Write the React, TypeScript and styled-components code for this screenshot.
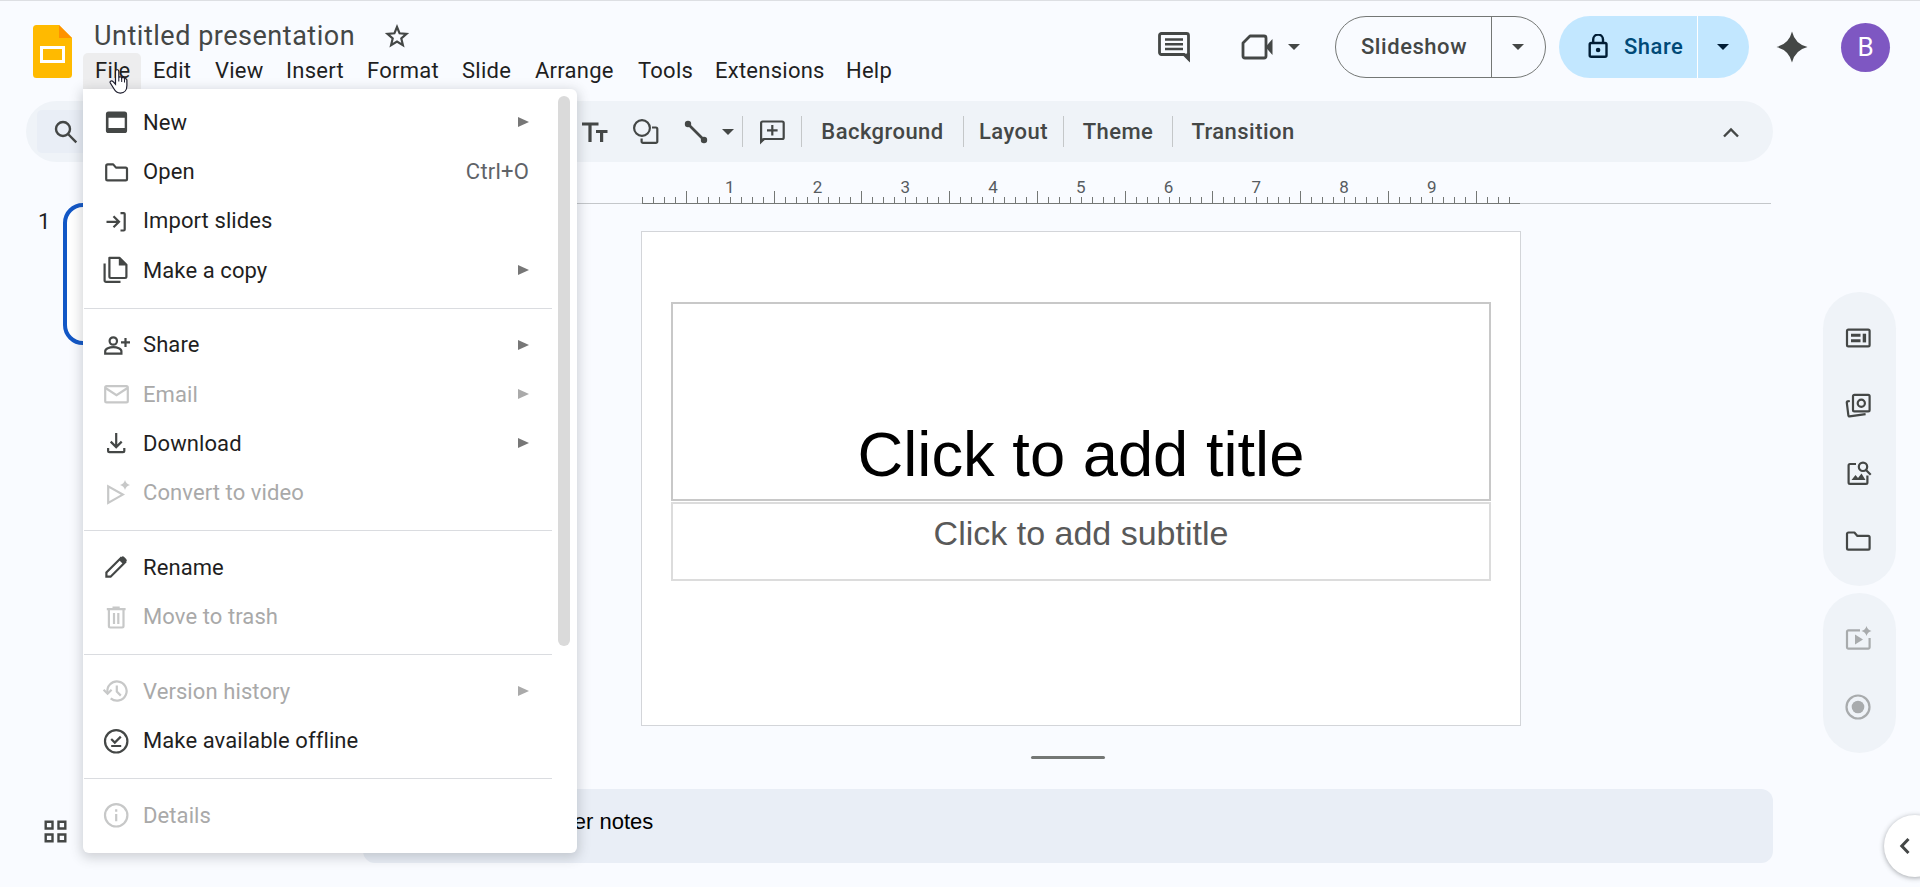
import type { ReactNode } from "react";
import styled, { createGlobalStyle } from "styled-components";

interface IconProps {
  size?: number;
  children: ReactNode;
}

const Icon: React.FC<IconProps> = ({ size = 28, children }) => (
  <svg
    width={size}
    height={size}
    viewBox={`0 0 ${size} ${size}`}
    fill="none"
    stroke="currentColor"
    strokeWidth="2.2"
  >
    {children}
  </svg>
);

const icons = {
  fresh: (
    <Icon>
      <path
        fill="currentColor"
        stroke="none"
        fillRule="evenodd"
        d="M6.500 3.600h16a2.600 2.600 0 0 1 2.600 2.600v16.200a2.600 2.600 0 0 1-2.600 2.600h-16a2.600 2.600 0 0 1-2.600-2.600V6.200A2.600 2.600 0 0 1 6.500 3.600ZM6.500 9.800v10.200h16.200V9.800Z"
      />
    </Icon>
  ),
  folder: (
    <Icon>
      <path
        strokeLinejoin="round"
        d="M4.200 21V8a1.600 1.600 0 0 1 1.600-1.600h5.400l2.800 3.200h9.600a1.400 1.400 0 0 1 1.400 1.400v10a1.400 1.400 0 0 1-1.400 1.400H5.600A1.400 1.400 0 0 1 4.200 21Z"
      />
    </Icon>
  ),
  importSlides: (
    <Icon>
      <path d="M4.500 14.800h12M11.500 9.300l5.500 5.500-5.500 5.500M18.500 6.100h3.200a1 1 0 0 1 1 1v15.400a1 1 0 0 1-1 1h-3.200" />
    </Icon>
  ),
  copy: (
    <Icon size={30}>
      <path d="M3.600 8.500v17a1.400 1.400 0 0 0 1.400 1.400h14.500M8.400 2.800h10l7 7v11.800a1.400 1.400 0 0 1-1.400 1.400H9.800a1.400 1.400 0 0 1-1.400-1.400Z" strokeLinejoin="round" />
      <path d="M17.800 2.400v8h8Z" fill="currentColor" stroke="none" />
    </Icon>
  ),
  personAdd: (
    <Icon>
      <circle cx="11.300" cy="10" r="3.700" />
      <path d="M3.200 22.700v-2.500c0-2.600 4.200-4 8.100-4s8.100 1.400 8.100 4v2.500ZM19 11.400h9M23.500 7v9" />
    </Icon>
  ),
  mail: (
    <Icon>
      <rect x="3.200" y="6.200" width="22.600" height="16.200" rx="1.400" />
      <path d="M3.500 8l11 7.200 11-7.200" />
    </Icon>
  ),
  download: (
    <Icon>
      <path d="M14.200 4v14M8.700 12.600l5.500 5.500 5.500-5.500M6.100 19v2.800a1.400 1.400 0 0 0 1.400 1.400h13.400a1.400 1.400 0 0 0 1.400-1.400V19" />
    </Icon>
  ),
  video: (
    <Icon>
      <path d="M6.200 7.300v16.600l14.600-8.300Z" />
      <path
        fill="currentColor"
        stroke="none"
        d="M23 1q1 4 5 5-4 1-5 5-1-4-5-5 4-1 5-5Z"
      />
    </Icon>
  ),
  pencil: (
    <Icon>
      <path d="M4.400 23.700v-4.200L18.900 5l4.200 4.200L8.600 23.700Z" />
      <path
        d="M16.700 6.700l2.700-2.700a2 2 0 0 1 2.800 0l2 2a2 2 0 0 1 0 2.800l-2.700 2.700Z"
        fill="currentColor"
        stroke="none"
      />
    </Icon>
  ),
  trash: (
    <Icon>
      <path d="M4.800 6.200h18.800M10.500 4.700h7.200M6.900 6.500v16.600a1.400 1.400 0 0 0 1.400 1.400h11.800a1.400 1.400 0 0 0 1.400-1.400V6.500M12 10v11M16.300 10v11" />
    </Icon>
  ),
  history: (
    <Icon>
      <path d="M5.500 15.500a9.600 9.600 0 1 1 3.200 5.800M14.800 8.600v6l4 4" />
      <path d="M1.600 12.800l4 4 4-4" />
    </Icon>
  ),
  offline: (
    <Icon>
      <circle cx="14.200" cy="14.300" r="11.200" />
      <path d="M9.200 12l3.600 3.600 6-6M9.200 19h10" />
    </Icon>
  ),
  info: (
    <Icon>
      <circle cx="14.200" cy="14.300" r="11.200" />
      <path d="M14.200 13v7.200M14.200 8.300v2.400" />
    </Icon>
  ),
};

interface MenuEntry {
  label: string;
  icon: ReactNode;
  disabled?: boolean;
  submenu?: boolean;
  shortcut?: string;
}

const fileMenu: MenuEntry[][] = [
  [
    { label: "New", icon: icons.fresh, submenu: true },
    { label: "Open", icon: icons.folder, shortcut: "Ctrl+O" },
    { label: "Import slides", icon: icons.importSlides },
    { label: "Make a copy", icon: icons.copy, submenu: true },
  ],
  [
    { label: "Share", icon: icons.personAdd, submenu: true },
    { label: "Email", icon: icons.mail, submenu: true, disabled: true },
    { label: "Download", icon: icons.download, submenu: true },
    { label: "Convert to video", icon: icons.video, disabled: true },
  ],
  [
    { label: "Rename", icon: icons.pencil },
    { label: "Move to trash", icon: icons.trash, disabled: true },
  ],
  [
    { label: "Version history", icon: icons.history, submenu: true, disabled: true },
    { label: "Make available offline", icon: icons.offline },
  ],
  [{ label: "Details", icon: icons.info, disabled: true }],
];

const menuBar = [
  { label: "File", width: 58 },
  { label: "Edit", width: 62 },
  { label: "View", width: 71 },
  { label: "Insert", width: 81 },
  { label: "Format", width: 95 },
  { label: "Slide", width: 73 },
  { label: "Arrange", width: 103 },
  { label: "Tools", width: 77 },
  { label: "Extensions", width: 131 },
  { label: "Help", width: 70 },
];

const ticks = Array.from({ length: 80 }, (_, i) => i);

const FileMenu: React.FC = () => (
  <Dropdown>
    <MenuList>
      {fileMenu.map((group, i) => (
        <MenuGroup key={i}>
          {group.map((item) => (
            <MenuRow key={item.label} $disabled={item.disabled}>
              <MenuIcon $disabled={item.disabled}>{item.icon}</MenuIcon>
              <span>{item.label}</span>
              {item.shortcut && <Shortcut>{item.shortcut}</Shortcut>}
              {item.submenu && <Arrow $disabled={item.disabled} />}
            </MenuRow>
          ))}
        </MenuGroup>
      ))}
    </MenuList>
    <Scrollbar />
  </Dropdown>
);

const Header: React.FC = () => (
  <HeaderBar>
    <Logo width="39" height="53" viewBox="0 0 39 53">
      <path d="M3.500 0H26l13 13v36.500a3.500 3.500 0 0 1-3.500 3.500h-32A3.500 3.500 0 0 1 0 49.500v-46A3.500 3.500 0 0 1 3.500 0Z" fill="#ffba00" />
      <path d="M26 0l13 13H26Z" fill="#ff9200" />
      <rect x="8.500" y="22.500" width="22" height="14" fill="none" stroke="#fff" strokeWidth="3" />
    </Logo>
    <TitleColumn>
      <TitleRow>
        <DocTitle>Untitled presentation</DocTitle>
        <svg width="26" height="26" viewBox="0 0 26 26" fill="none" stroke="#444746" strokeWidth="2.200">
          <path d="M13 4l2.600 6.300 6.900.6-5.200 4.500 1.600 6.700-5.900-3.600-5.900 3.600 1.600-6.700-5.200-4.500 6.900-.6Z" />
        </svg>
      </TitleRow>
      <MenuBar>
        {menuBar.map((item, i) => (
          <MenuButton key={item.label} $width={item.width} $open={i === 0}>
            {item.label}
          </MenuButton>
        ))}
      </MenuBar>
    </TitleColumn>
    <Actions>
      <svg width="32" height="32" viewBox="0 0 32 32" fill="none" stroke="#444746">
        <path d="M3.500 2.500h25a2 2 0 0 1 2 2V28l-4.500-4.500H3.500a2 2 0 0 1-2-2v-17a2 2 0 0 1 2-2Z" strokeWidth="2.800" />
        <path d="M26 23l5.800 8V22Z" fill="#444746" stroke="none" />
        <path d="M7 8.500h18M7 13.200h18M7 18h18" strokeWidth="2.600" />
      </svg>
      <Meet>
        <svg width="32" height="28" viewBox="0 0 32 28" fill="none" stroke="#444746">
          <path d="M9 3h14a2 2 0 0 1 2 2v18a2 2 0 0 1-2 2H4a2 2 0 0 1-2-2V10Z" strokeWidth="2.800" strokeLinejoin="round" />
          <path d="M24.500 14l7-8v16Z" fill="#444746" stroke="none" />
        </svg>
        <Caret $color="#444746" />
      </Meet>
      <SlideshowButton>
        <SlideshowLabel>Slideshow</SlideshowLabel>
        <SlideshowMore>
          <Caret $color="#444746" />
        </SlideshowMore>
      </SlideshowButton>
      <ShareButton>
        <ShareLabel>
          <svg width="20" height="26" viewBox="0 0 20 26" fill="none" stroke="#001d35" strokeWidth="2.400">
            <rect x="1.700" y="9" width="16.800" height="13.800" rx="1.500" />
            <path d="M5.200 9V5.500a4.900 4.900 0 0 1 9.800 0V9" />
            <circle cx="10.100" cy="16" r="2.300" fill="#001d35" stroke="none" />
          </svg>
          Share
        </ShareLabel>
        <ShareMore>
          <Caret $color="#001d35" />
        </ShareMore>
      </ShareButton>
      <Spark width="32" height="32" viewBox="0 0 32 32">
        <path d="M16 .500Q19 13 31.500 16 19 19 16 31.500 13 19 .500 16 13 13 16 .500Z" fill="#444746" />
      </Spark>
      <Avatar>B</Avatar>
    </Actions>
  </HeaderBar>
);

const Toolbar: React.FC = () => (
  <ToolbarPill>
    <SearchButton>
      <svg width="24" height="24" viewBox="0 0 24 24" fill="none" stroke="#444746" strokeWidth="2.400">
        <circle cx="9" cy="9" r="7" />
        <path d="M14 14l8.300 8.300" />
      </svg>
    </SearchButton>
    <Tools>
      <svg width="26" height="22" viewBox="0 0 26 22" fill="none" stroke="#444746" strokeWidth="3.200">
        <path d="M0 3h16.500M8 3v18M14 10.500h11.500M19.600 10.500V21" />
      </svg>
      <svg width="28" height="28" viewBox="0 0 28 28" fill="none" stroke="#444746" strokeWidth="2.200">
        <circle cx="10" cy="10" r="7.900" />
        <path d="M20 9.500h3.900a1.400 1.400 0 0 1 1.400 1.400v12.600a1.400 1.400 0 0 1-1.400 1.400H11a1.400 1.400 0 0 1-1.400-1.400V20.500" />
      </svg>
      <LineTool>
        <svg width="24" height="24" viewBox="0 0 24 24" fill="#444746" stroke="#444746">
          <path d="M4 4l16 16" strokeWidth="2.600" />
          <circle cx="4" cy="4" r="3.200" stroke="none" />
          <circle cx="20" cy="20" r="3.200" stroke="none" />
        </svg>
        <Caret $color="#444746" />
      </LineTool>
    </Tools>
    <Separator />
    <CommentTool>
      <svg width="26" height="26" viewBox="0 0 26 26" fill="none" stroke="#444746" strokeWidth="2.200">
        <path d="M2.100 22V4a1.500 1.500 0 0 1 1.500-1.500h19.600A1.500 1.500 0 0 1 24.700 4v14.500a1.500 1.500 0 0 1-1.500 1.500H5Z" />
        <path d="M1 19v6.500L6.500 20Z" fill="#444746" stroke="none" />
        <path d="M13.300 6v10.500M8 11.300h10.600" />
      </svg>
    </CommentTool>
    <Separator />
    <ToolButton $width={161}>Background</ToolButton>
    <Separator />
    <ToolButton $width={99}>Layout</ToolButton>
    <Separator />
    <ToolButton $width={108}>Theme</ToolButton>
    <Separator />
    <ToolButton $width={140}>Transition</ToolButton>
    <Collapse width="18" height="12" viewBox="0 0 18 12" fill="none" stroke="#444746" strokeWidth="2.400">
      <path d="M2 9.500l7-7 7 7" />
    </Collapse>
  </ToolbarPill>
);

const SideRail: React.FC = () => (
  <Rail>
    <RailGroup $height={294} $gap={40} $top={32}>
      <Icon>
        <rect x="3" y="5.700" width="22.600" height="16.600" rx="1.400" />
        <path d="M7 11.200h9.500M7 16.800h9.500" strokeWidth="3" />
        <path d="M20.400 9.700v8.700" strokeWidth="3.400" />
      </Icon>
      <Icon>
        <rect x="9" y="2.800" width="16.600" height="16.600" rx="1.400" />
        <circle cx="17.300" cy="11.200" r="3.600" />
        <path d="M5.800 9l-2.200.4a1 1 0 0 0-.8 1.200l1.600 13a1 1 0 0 0 1.200.8l16-2.200" />
      </Icon>
      <Icon>
        <path d="M12 4H6a1.400 1.400 0 0 0-1.400 1.400v17A1.400 1.400 0 0 0 6 23.800h16a1.400 1.400 0 0 0 1.400-1.400V15.500" />
        <circle cx="19" cy="6.800" r="4.200" />
        <path d="M22 10l4.700 4.700" />
        <path d="M7.500 20l4-5 2.500 3 3.500-4.500 4 6.500Z" fill="currentColor" stroke="none" />
      </Icon>
      <Icon>
        <path
          strokeLinejoin="round"
          d="M3 20.200V5.900A1.400 1.400 0 0 1 4.400 4.500h6l3 3.400h10.800a1.400 1.400 0 0 1 1.400 1.400v10.900a1.400 1.400 0 0 1-1.400 1.400H4.400A1.400 1.400 0 0 1 3 20.200Z"
        />
      </Icon>
    </RailGroup>
    <RailGroup $height={160} $gap={39.5} $top={32} $muted>
      <Icon>
        <path d="M16 5.300H4.400A1.400 1.400 0 0 0 3 6.700v15.600a1.400 1.400 0 0 0 1.400 1.400h19.800a1.400 1.400 0 0 0 1.400-1.400V13" />
        <path d="M11 9.500v10l8-5Z" fill="currentColor" stroke="none" />
        <path d="M22.500 1q1 4 5 5-4 1-5 5-1-4-5-5 4-1 5-5Z" fill="currentColor" stroke="none" />
      </Icon>
      <Icon>
        <circle cx="14" cy="14" r="11.500" />
        <circle cx="14" cy="14" r="6.300" fill="currentColor" stroke="none" />
      </Icon>
    </RailGroup>
  </Rail>
);

const App: React.FC = () => {
  return (
    <Page>
      <GlobalStyle />
      <Header />
      <Toolbar />
      <Body>
        <Filmstrip>
          <ThumbRow>
            <ThumbNumber>1</ThumbNumber>
            <Thumb />
          </ThumbRow>
          <GridButton width="23" height="23" viewBox="0 0 23 23" fill="none" stroke="#444746" strokeWidth="2.400">
            <path d="M1.700 1.700h6.800v6.800H1.700ZM14.500 1.700h6.800v6.800h-6.800ZM1.700 14.500h6.800v6.800H1.700ZM14.500 14.500h6.800v6.800h-6.800Z" />
          </GridButton>
        </Filmstrip>
        <Workspace>
          <Ruler>
            <Scale>
              {ticks.map((i) => (
                <Tick key={i} $major={i % 8 === 4}>
                  {i > 0 && i % 8 === 0 && <TickLabel>{i / 8}</TickLabel>}
                </Tick>
              ))}
            </Scale>
          </Ruler>
          <Slide>
            <TitleBox>Click to add title</TitleBox>
            <SubtitleBox>Click to add subtitle</SubtitleBox>
          </Slide>
          <Handle />
          <Notes>Click to add speaker notes</Notes>
        </Workspace>
        <SideRail />
      </Body>
      <FileMenu />
      <Pointer width="22" height="28" viewBox="0 0 22 28">
        <path
          d="M7.500 3.500c0-2.600 3.300-2.600 3.300 0v6.200c.5-1.400 2.800-1.200 2.900.5.600-1.200 2.700-.9 2.800.8.700-.8 2.400-.4 2.400 1.300v5.200c0 4.400-2.400 7.600-6.500 7.600-3.400 0-5-1.500-6.500-4.300l-3.700-6c-.7-1.700 1.500-2.600 2.900-1.100l2.400 2.500Z"
          fill="#fff"
          stroke="#1b1b2b"
          strokeWidth="1.200"
        />
        <path d="M10.800 9.500v4M13.700 10.500v3.500M16.500 11.500v3" stroke="#1b1b2b" />
      </Pointer>
      <PanelToggle>
        <svg width="12" height="18" viewBox="0 0 12 18" fill="none" stroke="#444746" strokeWidth="3">
          <path d="M9.500 2l-6.700 7 6.700 7" />
        </svg>
      </PanelToggle>
    </Page>
  );
};

export default App;

const GlobalStyle = createGlobalStyle`
  body {
    margin: 0;
    background-color: #f9fbff;
  }

  * {
    box-sizing: border-box;
  }

  svg {
    display: block;
    flex-shrink: 0;
  }
`;

const Page = styled.div`
  position: relative;
  width: 1920px;
  height: 887px;
  overflow: hidden;
  border-top: 1px solid #dddfe3;
  background-color: #f9fbff;
  color: #1f1f1f;
  font-family: Roboto, "Liberation Sans", sans-serif;
  font-size: 22px;
  white-space: nowrap;
`;

const HeaderBar = styled.header`
  display: flex;
  align-items: flex-start;
  height: 100px;
`;

const Logo = styled.svg`
  margin: 24px 0 0 33px;
`;

const TitleColumn = styled.div`
  margin: 18px 0 0 11px;
`;

const TitleRow = styled.div`
  display: flex;
  align-items: center;
  gap: 29px;
  height: 34px;
  padding-left: 11px;
`;

const DocTitle = styled.div`
  width: 261px;
  color: #444746;
  font-size: 27px;
  letter-spacing: 0.52px;
`;

const MenuBar = styled.nav`
  display: flex;
`;

const MenuButton = styled.div<{ $width: number; $open: boolean }>`
  width: ${(p) => p.$width}px;
  height: 36px;
  padding-left: 12px;
  line-height: 36px;
  letter-spacing: 0.25px;
  border-radius: 5px 5px 0 0;
  background-color: ${(p) => (p.$open ? "#ededee" : "transparent")};
`;

const Actions = styled.div`
  display: flex;
  align-items: center;
  height: 62px;
  margin: 15px 0 0 auto;
  padding-right: 30px;
`;

const Caret = styled.span<{ $color: string }>`
  border: 6px solid transparent;
  border-top-color: ${(p) => p.$color};
  border-bottom: 0;
`;

const Meet = styled.div`
  display: flex;
  align-items: center;
  gap: 15px;
  margin: 0 35px 0 51px;
`;

const SlideshowButton = styled.div`
  display: flex;
  width: 211px;
  height: 62px;
  margin-top: -1px;
  border: 1px solid #747775;
  border-radius: 31px;
  color: #444746;
  font-weight: 500;
`;

const SlideshowLabel = styled.div`
  display: flex;
  align-items: center;
  width: 156px;
  padding-left: 25px;
  letter-spacing: 0.55px;
  border-right: 1px solid #747775;
`;

const SlideshowMore = styled.div`
  display: flex;
  align-items: center;
  padding-left: 20px;
`;

const ShareButton = styled.div`
  display: flex;
  width: 190px;
  height: 62px;
  margin: -1px 0 0 13px;
  border-radius: 31px;
  background-color: #c2e7ff;
  color: #004a77;
  font-weight: 500;
`;

const ShareLabel = styled.div`
  display: flex;
  align-items: center;
  gap: 16px;
  width: 139px;
  padding-left: 29px;
  letter-spacing: 0.5px;
  border-right: 1px solid #fff;
`;

const ShareMore = styled.div`
  display: flex;
  align-items: center;
  padding-left: 19px;
`;

const Spark = styled.svg`
  margin: 0 33px 0 27px;
`;

const Avatar = styled.div`
  display: flex;
  align-items: center;
  justify-content: center;
  width: 49px;
  height: 49px;
  border-radius: 50%;
  background-color: #7e57c2;
  color: #fff;
  font-size: 26px;
`;

const ToolbarPill = styled.div`
  display: flex;
  align-items: center;
  width: 1747px;
  height: 61px;
  margin-left: 26px;
  border-radius: 31px;
  background-color: #eff3f8;
`;

const SearchButton = styled.div`
  display: flex;
  align-items: center;
  width: 150px;
  height: 43px;
  margin-left: 11px;
  padding-left: 17px;
  border-radius: 5px;
  background-color: #e9eef6;
`;

const Tools = styled.div`
  display: flex;
  align-items: center;
  justify-content: space-between;
  width: 152px;
  margin: 0 8px 0 auto;
`;

const LineTool = styled.div`
  display: flex;
  align-items: center;
  gap: 14px;
`;

const Separator = styled.div`
  width: 1px;
  height: 31px;
  background-color: #c4c7c9;
`;

const CommentTool = styled.div`
  width: 58px;
  padding-left: 16px;
`;

const ToolButton = styled.div<{ $width: number }>`
  width: ${(p) => p.$width}px;
  color: #444746;
  font-weight: 500;
  letter-spacing: 0.45px;
  text-align: center;
`;

const Collapse = styled.svg`
  margin: 2px 33px 0 409px;
`;

const Body = styled.div`
  display: flex;
  height: 725px;
`;

const Filmstrip = styled.div`
  display: flex;
  flex-direction: column;
  justify-content: space-between;
  width: 363px;
  padding: 41px 0 44px;
`;

const ThumbRow = styled.div`
  display: flex;
`;

const ThumbNumber = styled.div`
  width: 63px;
  padding: 6px 0 0 38px;
`;

const Thumb = styled.div`
  width: 251px;
  height: 142px;
  border: 4px solid #1257c6;
  border-radius: 20px;
  background-color: #fff;
`;

const GridButton = styled.svg`
  margin-left: 44px;
`;

const Workspace = styled.main`
  width: 1410px;
`;

const Ruler = styled.div`
  display: flex;
  align-items: flex-end;
  height: 42px;
  margin-right: 2px;
  padding-left: 279px;
  border-bottom: 1px solid #c4c7ca;
`;

const Scale = styled.div`
  display: flex;
  align-items: flex-end;
  width: 877.6px;
  margin-bottom: -1px;
  border-bottom: 1px solid #747775;
`;

const Tick = styled.div<{ $major: boolean }>`
  position: relative;
  width: 10.97px;
  height: ${(p) => (p.$major ? 12 : 6)}px;
  border-left: 1px solid #747775;
`;

const TickLabel = styled.span`
  position: absolute;
  bottom: 6px;
  left: -11px;
  width: 20px;
  color: #575b5f;
  font-size: 17px;
  line-height: 20px;
  text-align: center;
`;

const Slide = styled.div`
  display: flex;
  flex-direction: column;
  gap: 1px;
  width: 880px;
  height: 495px;
  margin: 27px 0 0 278px;
  padding: 70px 29px;
  border: 1px solid #d3d5d9;
  background-color: #fff;
  font-family: "Liberation Sans", Arial, sans-serif;
  text-align: center;
`;

const TitleBox = styled.div`
  height: 199px;
  padding-top: 114px;
  border: 2px solid #c8c8c8;
  color: #000;
  font-size: 63.3px;
  line-height: 72px;
`;

const SubtitleBox = styled.div`
  height: 79px;
  padding-top: 9px;
  border: 2px solid #dcdcdc;
  color: #595959;
  font-size: 34px;
  line-height: 40px;
`;

const Handle = styled.div`
  width: 74px;
  height: 3px;
  margin: 30px auto;
  border-radius: 2px;
  background-color: #747775;
`;

const Notes = styled.div`
  height: 74px;
  padding: 20px 31px;
  border-radius: 12px;
  background-color: #e9eef6;
  color: #000;
  font-family: "Liberation Sans", Arial, sans-serif;
  line-height: 25px;
`;

const Rail = styled.aside`
  display: flex;
  flex-direction: column;
  gap: 7px;
  margin: 130px 0 0 50px;
`;

const RailGroup = styled.div<{
  $height: number;
  $gap: number;
  $top: number;
  $muted?: boolean;
}>`
  display: flex;
  flex-direction: column;
  align-items: center;
  gap: ${(p) => p.$gap}px;
  width: 73px;
  height: ${(p) => p.$height}px;
  padding: ${(p) => p.$top}px 3px 0 0;
  border-radius: 37px;
  background-color: #eff3f8;
  color: ${(p) => (p.$muted ? "#a8abad" : "#444746")};
`;

const Dropdown = styled.div`
  position: absolute;
  top: 88px;
  left: 83px;
  display: flex;
  width: 494px;
  height: 764px;
  border-radius: 0 6px 6px 6px;
  background-color: #fff;
  box-shadow: 0 3px 12px 2px rgb(60 64 67 / 22%);
`;

const MenuList = styled.div`
  width: 469px;
  padding-top: 8.6px;
`;

const MenuGroup = styled.div`
  & + & {
    margin: 12.8px 0 0 1px;
    padding-top: 11.6px;
    border-top: 1px solid #dadce0;
  }

  & + & > div {
    margin-left: -1px;
  }
`;

const MenuRow = styled.div<{ $disabled?: boolean }>`
  display: flex;
  align-items: center;
  height: 49.3px;
  padding: 0 23px 0 19px;
  color: ${(p) => (p.$disabled ? "#a9a9a9" : "#1f1f1f")};
  letter-spacing: 0.09px;
`;

const MenuIcon = styled.div<{ $disabled?: boolean }>`
  display: flex;
  justify-content: center;
  width: 28px;
  margin-right: 13px;
  color: ${(p) => (p.$disabled ? "#c7c8c8" : "#444746")};
`;

const Shortcut = styled.span`
  margin-left: auto;
  color: #5f6368;
  letter-spacing: 0.2px;
`;

const Arrow = styled.span<{ $disabled?: boolean }>`
  margin-left: auto;
  border: 5px solid transparent;
  border-left: 11px solid ${(p) => (p.$disabled ? "#aaa" : "#777")};
  border-right: 0;
`;

const Scrollbar = styled.div`
  width: 12px;
  height: 550px;
  margin: 7px 0 0 6px;
  border-radius: 6px;
  background-color: #dadada;
`;

const Pointer = styled.svg`
  position: absolute;
  top: 67px;
  left: 108px;
`;

const PanelToggle = styled.div`
  position: absolute;
  top: 814px;
  left: 1884px;
  display: flex;
  align-items: center;
  width: 62px;
  height: 62px;
  padding-left: 15px;
  border-radius: 50%;
  background-color: #fff;
  box-shadow: 0 1px 5px rgb(60 64 67 / 45%);
`;
